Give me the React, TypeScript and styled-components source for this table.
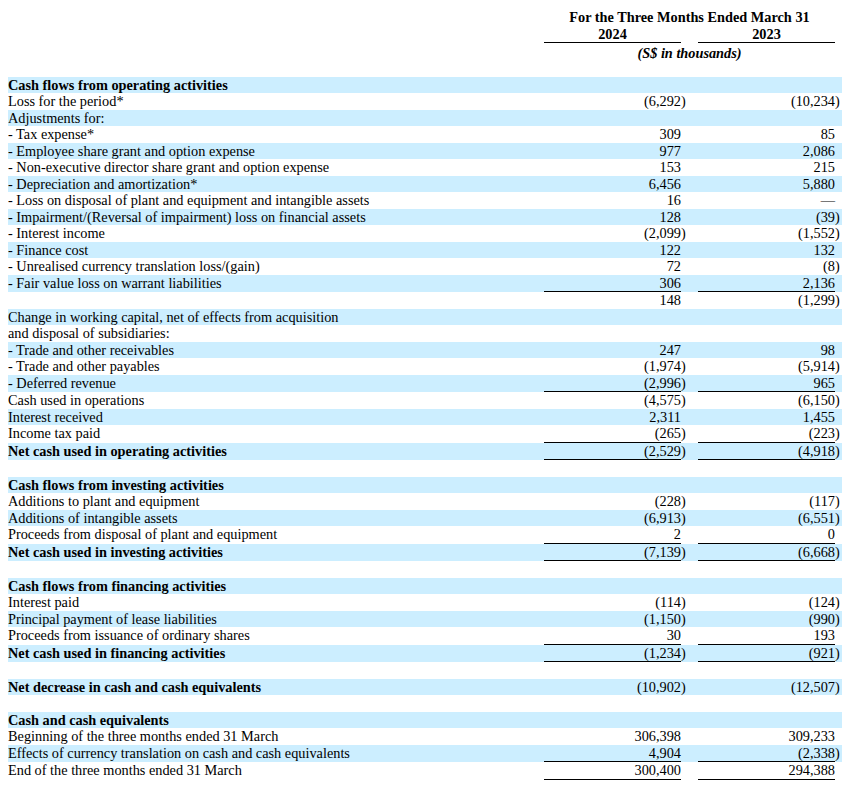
import React from 'react';
import styled, { createGlobalStyle } from 'styled-components';

const GlobalStyle = createGlobalStyle`
  body {
    margin: 8px;
    background: #ffffff;
    color: #000000;
    font-family: "Liberation Serif", "Times New Roman", serif;
    font-size: 14.3px;
  }
`;

const COLS = '536px 137px 8px 9px 137px 8px';

const Table = styled.div`
  width: 835px;
  display: flex;
  flex-direction: column;
`;

const HeadRow = styled.div`
  display: grid;
  grid-template-columns: ${COLS};
  line-height: 16.5px;
  font-weight: bold;
`;

const HeadTitle = styled.div`
  grid-column: 2 / 6;
  text-align: center;
  padding-top: 1px;
`;

const HeadYear = styled.div<{ $col: number }>`
  grid-column: ${(p) => p.$col} / ${(p) => p.$col + 1};
  text-align: center;
  border-bottom: 1px solid #000;
`;

const HeadUnit = styled.div`
  grid-column: 2 / 6;
  padding-top: 2px;
  text-align: center;
  font-style: italic;
`;

const Spacer = styled.div`
  height: 15px;
`;

const Row = styled.div<{ $shaded: boolean }>`
  display: grid;
  grid-template-columns: ${COLS};
  line-height: 16.5px;
  background: ${(p) => (p.$shaded ? '#cceeff' : 'transparent')};
`;

const Label = styled.div<{ $bold?: boolean }>`
  font-weight: ${(p) => (p.$bold ? 'bold' : 'normal')};
  white-space: nowrap;
`;

const Num = styled.div<{ $line?: boolean }>`
  text-align: right;
  white-space: nowrap;
  border-bottom: ${(p) => (p.$line ? '1px solid #000' : '0')};
`;

const Paren = styled.div`
  text-align: left;
`;

const Gap = styled.div``;

type RowData = {
  label: string;
  bold?: boolean;
  a?: string;
  b?: string;
  line?: boolean;
};

const rows: RowData[] = [
  { label: 'Cash flows from operating activities', bold: true },
  { label: 'Loss for the period*', a: '(6,292)', b: '(10,234)' },
  { label: 'Adjustments for:' },
  { label: '- Tax expense*', a: '309', b: '85' },
  { label: '- Employee share grant and option expense', a: '977', b: '2,086' },
  { label: '- Non-executive director share grant and option expense', a: '153', b: '215' },
  { label: '- Depreciation and amortization*', a: '6,456', b: '5,880' },
  { label: '- Loss on disposal of plant and equipment and intangible assets', a: '16', b: '—' },
  { label: '- Impairment/(Reversal of impairment) loss on financial assets', a: '128', b: '(39)' },
  { label: '- Interest income', a: '(2,099)', b: '(1,552)' },
  { label: '- Finance cost', a: '122', b: '132' },
  { label: '- Unrealised currency translation loss/(gain)', a: '72', b: '(8)' },
  { label: '- Fair value loss on warrant liabilities', a: '306', b: '2,136', line: true },
  { label: '', a: '148', b: '(1,299)' },
  { label: 'Change in working capital, net of effects from acquisition' },
  { label: 'and disposal of subsidiaries:' },
  { label: '- Trade and other receivables', a: '247', b: '98' },
  { label: '- Trade and other payables', a: '(1,974)', b: '(5,914)' },
  { label: '- Deferred revenue', a: '(2,996)', b: '965', line: true },
  { label: 'Cash used in operations', a: '(4,575)', b: '(6,150)' },
  { label: 'Interest received', a: '2,311', b: '1,455' },
  { label: 'Income tax paid', a: '(265)', b: '(223)', line: true },
  { label: 'Net cash used in operating activities', bold: true, a: '(2,529)', b: '(4,918)', line: true },
  { label: '' },
  { label: 'Cash flows from investing activities', bold: true },
  { label: 'Additions to plant and equipment', a: '(228)', b: '(117)' },
  { label: 'Additions of intangible assets', a: '(6,913)', b: '(6,551)' },
  { label: 'Proceeds from disposal of plant and equipment', a: '2', b: '0', line: true },
  { label: 'Net cash used in investing activities', bold: true, a: '(7,139)', b: '(6,668)', line: true },
  { label: '' },
  { label: 'Cash flows from financing activities', bold: true },
  { label: 'Interest paid', a: '(114)', b: '(124)' },
  { label: 'Principal payment of lease liabilities', a: '(1,150)', b: '(990)' },
  { label: 'Proceeds from issuance of ordinary shares', a: '30', b: '193', line: true },
  { label: 'Net cash used in financing activities', bold: true, a: '(1,234)', b: '(921)', line: true },
  { label: '' },
  { label: 'Net decrease in cash and cash equivalents', bold: true, a: '(10,902)', b: '(12,507)' },
  { label: '' },
  { label: 'Cash and cash equivalents', bold: true },
  { label: 'Beginning of the three months ended 31 March', a: '306,398', b: '309,233' },
  { label: 'Effects of currency translation on cash and cash equivalents', a: '4,904', b: '(2,338)', line: true },
  { label: 'End of the three months ended 31 March', a: '300,400', b: '294,388', line: true },
];

const split = (v?: string): [string, string] => {
  if (!v) return ['', ''];
  if (v.endsWith(')')) return [v.slice(0, -1), ')'];
  return [v, ''];
};

export default function App() {
  return (
    <>
      <GlobalStyle />
      <Table>
        <HeadRow>
          <HeadTitle>For the Three Months Ended March 31</HeadTitle>
        </HeadRow>
        <HeadRow>
          <HeadYear $col={2}>2024</HeadYear>
          <HeadYear $col={5}>2023</HeadYear>
        </HeadRow>
        <HeadRow>
          <HeadUnit>(S$ in thousands)</HeadUnit>
        </HeadRow>
        <Spacer />
        {rows.map((r, i) => {
          const [a, pa] = split(r.a);
          const [b, pb] = split(r.b);
          const hasNums = r.a !== undefined;
          return (
            <Row key={i} $shaded={i % 2 === 0}>
              <Label $bold={r.bold}>{r.label || '\u00a0'}</Label>
              <Num $line={hasNums && r.line}>{a}</Num>
              <Paren>{pa}</Paren>
              <Gap />
              <Num $line={hasNums && r.line}>{b}</Num>
              <Paren>{pb}</Paren>
            </Row>
          );
        })}
      </Table>
    </>
  );
}
